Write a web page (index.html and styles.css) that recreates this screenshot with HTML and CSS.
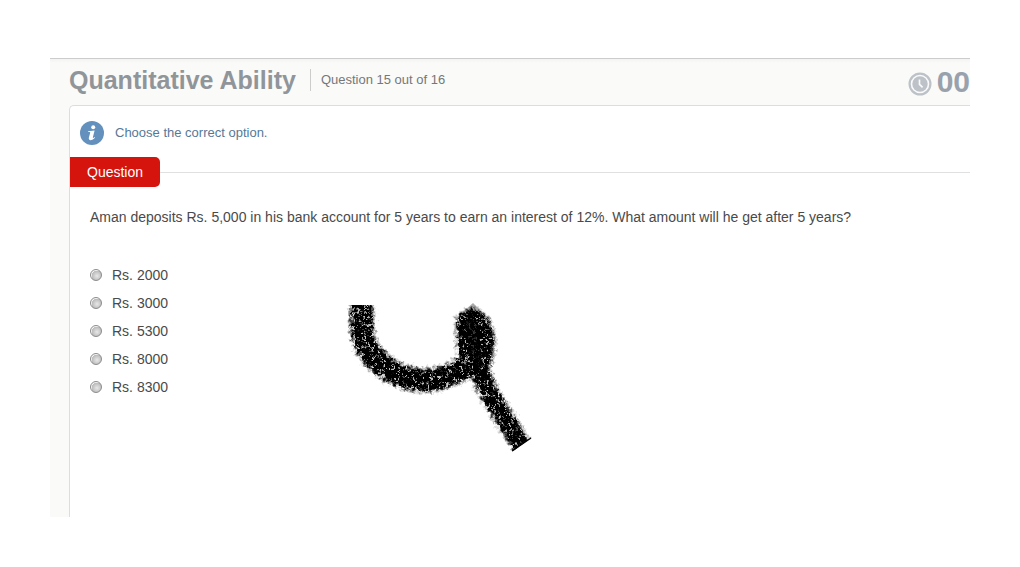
FILE: index.html
```html
<!DOCTYPE html>
<html lang="en">
<head>
<meta charset="utf-8">
<title>Quantitative Ability</title>
<link rel="stylesheet" href="styles.css">
</head>
<body>
<main class="quiz">
  <header class="quiz-header">
    <h1 class="title">Quantitative Ability</h1>
    <p class="progress">Question 15 out of 16</p>
    <div class="timer">
      <svg class="clock" viewBox="0 0 24 24" aria-hidden="true">
        <circle cx="12" cy="12" r="10.4" fill="#fafafa" stroke="#bcc2c8" stroke-width="2.2"/>
        <circle cx="12" cy="12" r="7.7" fill="#bcc2c8"/>
        <path d="M11.5 7.6V12.3L14.6 15.4" fill="none" stroke="#fafafa" stroke-width="1.7"/>
      </svg>
      <span class="time">00</span>
    </div>
  </header>
  <section class="card">
    <p class="hint">
      <svg class="info" viewBox="0 0 24 24" aria-hidden="true">
        <circle cx="12" cy="12" r="12" fill="#6390bd"/>
        <circle cx="13.2" cy="6.3" r="2" fill="#fff"/>
        <path d="M8.2 10.2L14.6 9.5L12.9 16.3Q12.7 17.2 13.3 17L14.5 16L15 16.8Q12.8 19.3 10.6 19.2Q8.3 18.8 8.9 16.5L10.2 11.8Q10.4 11 9.6 11H8.1Z" fill="#fff"/>
      </svg>
      Choose the correct option.
    </p>
    <div class="divider"><h2 class="tab">Question</h2></div>
    <form class="question">
      <p class="prompt" id="prompt">Aman deposits Rs. 5,000 in his bank account for 5 years to earn an interest of 12%. What amount will he get after 5 years?</p>
      <div class="options" role="radiogroup" aria-labelledby="prompt">
        <label class="option"><input class="radio" type="radio" name="answer">Rs. 2000</label>
        <label class="option"><input class="radio" type="radio" name="answer">Rs. 3000</label>
        <label class="option"><input class="radio" type="radio" name="answer">Rs. 5300</label>
        <label class="option"><input class="radio" type="radio" name="answer">Rs. 8000</label>
        <label class="option"><input class="radio" type="radio" name="answer">Rs. 8300</label>
      </div>
    </form>
  </section>
  <svg class="scribble" viewBox="0 0 220 170" aria-hidden="true">
    <defs>
      <filter id="chalk" filterUnits="userSpaceOnUse" x="0" y="0" width="220" height="170" color-interpolation-filters="sRGB">
        <feGaussianBlur in="SourceGraphic" stdDeviation="2.2" result="soft"/>
        <feTurbulence type="fractalNoise" baseFrequency="0.27" numOctaves="2" seed="8" result="noise"/>
        <feColorMatrix in="noise" type="matrix" values="0 0 0 0 0  0 0 0 0 0  0 0 0 0 0  5 0 0 0 -1.6" result="grain"/>
        <feComposite in="soft" in2="grain" operator="arithmetic" k1="1.1" k2="0.3" k3="0" k4="-0.05" result="speckled"/>
        <feDisplacementMap in="speckled" in2="noise" scale="8" xChannelSelector="R" yChannelSelector="G"/>
      </filter>
      <clipPath id="ends"><path d="M0 15H120L143 12L164 28L202 147L182 162L0 170Z"/></clipPath>
    </defs>
    <path d="M126 28L143 13L157 27Z" fill="#aaa"/>
    <g clip-path="url(#ends)">
      <g filter="url(#chalk)" fill="none" stroke="#000">
        <path d="M32 0V42Q34 55 42 65Q56 82 77 88Q99 94 120 85Q137 79 146 67" stroke-width="22"/>
        <path d="M128 28L143 19L157 29L163 48L161 67L156 82H140L129 60Z" fill="#000" stroke-width="3"/>
        <path d="M147 70Q151 88 161 107L206 178" stroke-width="18"/>
      </g>
      <path d="M136 30L143 24L149 35L152 77L144 78L137 50Z" fill="#000" opacity=".7"/>
    </g>
    <path d="M182 161L201 148" stroke="#000" stroke-width="1.5"/>
  </svg>
</main>
</body>
</html>
```
FILE: styles.css
```css
* { box-sizing: border-box; }
body {
  margin: 0;
  min-height: 100vh;
  padding: 58px 50px 50px;
  display: flex;
  background: #fff;
  color: #4a4a4a;
  font-family: "Liberation Sans", Arial, sans-serif;
}
h1, h2, p { margin: 0; }
.quiz {
  position: relative;
  flex: 1;
  display: flex;
  flex-direction: column;
  padding-left: 19px;
  border-top: 1px solid #ccc;
  background: linear-gradient(#f3f3f2, #fafaf8 4px);
}
.quiz-header {
  display: flex;
  align-items: center;
  height: 46px;
  padding-bottom: 4px;
}
.title {
  padding-right: 14px;
  color: #90959a;
  font-size: 25px;
  line-height: 42px;
}
.progress {
  padding-left: 10px;
  border-left: 1px solid #ccc;
  color: #777;
  font-size: 13px;
  line-height: 22px;
}
.timer {
  display: flex;
  align-items: center;
  gap: 5px;
  margin-left: auto;
  padding-top: 4px;
}
.clock { width: 24px; height: 24px; margin-top: 4px; }
.time {
  color: #98a1ac;
  font-size: 30px;
  font-weight: bold;
  line-height: 42px;
}
.card {
  flex: 1;
  border: solid #dcdde0;
  border-width: 1px 0 0 1px;
  border-top-left-radius: 5px;
  background: #fff;
}
.hint {
  display: flex;
  align-items: center;
  gap: 11px;
  padding: 15px 10px 12px;
  color: #587895;
  font-size: 13px;
  line-height: 24px;
}
.info { width: 24px; height: 24px; }
.divider {
  display: flex;
  align-items: center;
}
.divider::after {
  content: "";
  flex: 1;
  height: 1px;
  background: #dfe0e2;
}
.tab {
  padding: 0 17px;
  border-radius: 0 5px 5px 0;
  background: #d4140d;
  color: #fff;
  font-size: 14px;
  font-weight: normal;
  line-height: 30px;
}
.question { padding: 20px; font-size: 14px; }
.prompt { line-height: 20px; }
.options {
  display: flex;
  flex-direction: column;
  align-items: flex-start;
  padding-top: 34px;
}
.option {
  display: flex;
  align-items: center;
  gap: 10px;
  line-height: 28px;
}
.radio {
  appearance: none;
  width: 12px;
  height: 12px;
  margin: 0;
  border: 1px solid #8c8c8c;
  border-radius: 50%;
  background: radial-gradient(circle at 60% 60%, #e8e8e8, #bababa 60%, #f4f4f4 65%);
}
.radio:checked { background: radial-gradient(#333 35%, #eee 40%); }
.scribble {
  position: absolute;
  left: 280px;
  top: 231px;
  width: 220px;
  height: 170px;
  pointer-events: none;
}
```
